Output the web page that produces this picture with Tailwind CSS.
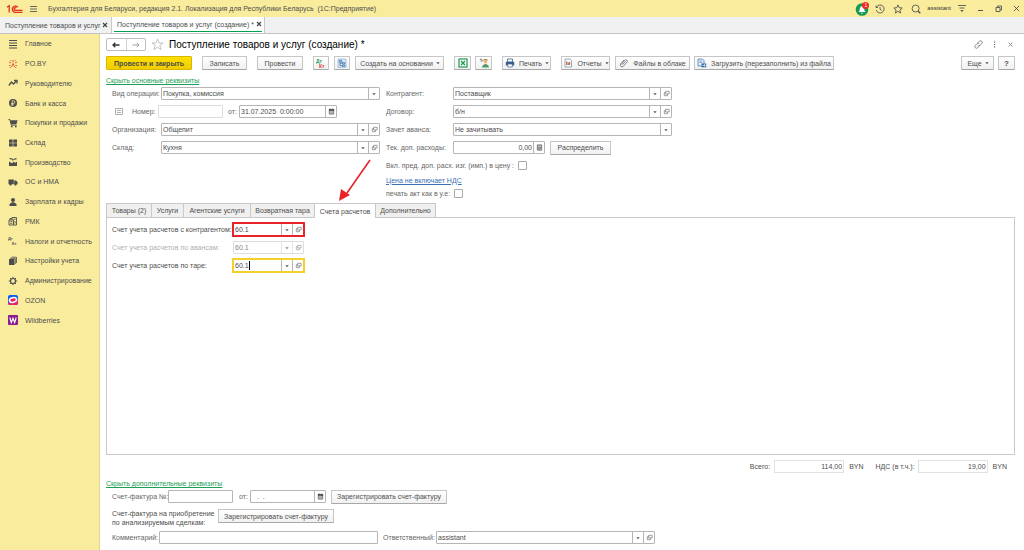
<!DOCTYPE html>
<html lang="ru">
<head>
  <meta charset="UTF-8">
  <meta name="viewport" content="width=device-width, initial-scale=1">
  <title>Поступление товаров и услуг (создание)</title>
  <script src="https://cdn.jsdelivr.net/npm/@tailwindcss/browser@4"></script>
</head>
<body class="flex min-h-screen flex-col bg-white font-['Liberation_Sans',Arial,sans-serif] text-[7px] leading-[9px] text-[#4d4d4d]">

  <!-- Shared icons -->
  <svg class="hidden">
    <symbol id="caret" viewBox="0 0 6 6"><path d="M1.300 2.200h3.400L3 4.200z" fill="#555"/></symbol>
    <symbol id="open" viewBox="0 0 8 8"><path d="M3 1.500h4v3H3zM3 3H1.500v3.500H5V4.500" fill="none" stroke="#777" stroke-width=".8"/></symbol>
    <symbol id="calendar" viewBox="0 0 8 8"><path d="M1.500 2h5v5h-5z" fill="#ddd" stroke="#555" stroke-width=".8"/><path d="M1 1.500h6v1.500H1zM2 .6h1v1H2zM5 .6h1v1H5z" fill="#444"/><path d="M2 4.300h4M2 5.700h4M3.300 3.200v3.500M4.800 3.200v3.500" stroke="#777" stroke-width=".4"/></symbol>
  </svg>

  <!-- Title bar -->
  <header class="flex h-[17px] items-center bg-[#faec9d] pl-[6px] pr-[3px]">
    <svg class="h-[10px] w-[17px]" viewBox="0 0 17 10" fill="none" stroke="#e0301e" stroke-width="1.300">
      <path d="M1 3.200L3.200 1.800V8.500M11.800 3.300A3.100 3.100 0 1 0 8.800 8.300H16.500M10.300 4A1.400 1.400 0 1 0 8.800 6.400H16.500"/>
    </svg>
    <button class="ml-[6px]" aria-label="Меню">
      <svg class="h-[8px] w-[9px]" viewBox="0 0 9 8" stroke="#555" stroke-width=".9"><path d="M1 1.500h7M1 4h7M1 6.500h7"/></svg>
    </button>
    <span class="ml-[10px] whitespace-pre">Бухгалтерия для Беларуси, редакция 2.1. Локализация для Республики Беларусь  (1С:Предприятие)</span>
    <div class="ml-auto flex items-center gap-[8px]">
      <button class="relative" aria-label="Уведомления">
        <svg class="h-[14px] w-[14px]" viewBox="0 0 14 14"><circle cx="7" cy="7.500" r="6.300" fill="#159a52"/><path d="M3.500 10c1.200-1 1-2 1.400-3.500C5.300 4.800 6 4.200 7 4.200s1.700.6 2.100 2.300c.4 1.500.2 2.500 1.400 3.500zM6 10.800h2c0 1.200-2 1.200-2 0z" fill="#fff"/></svg>
        <span class="absolute right-0 top-0 size-[7px] rounded-full bg-[#ee2b24] text-center text-[5px] leading-[7px] text-white">1</span>
      </button>
      <button class="-ml-[2px]" aria-label="История"><svg class="size-[10px]" viewBox="0 0 10 10" fill="none" stroke="#555" stroke-width=".9"><path d="M1.500 3.200A4 4 0 1 1 1.200 6M1 1.500v2h2M5 2.800v2.500l1.700 1"/></svg></button>
      <button aria-label="Избранное"><svg class="size-[10px]" viewBox="0 0 10 10" fill="none" stroke="#555" stroke-width=".9"><path d="M5 .9l1.200 2.800 3 .3-2.300 2 .7 3L5 7.400 2.400 9l.7-3L.8 4l3-.3z"/></svg></button>
      <button aria-label="Поиск"><svg class="size-[10px]" viewBox="0 0 10 10" fill="none" stroke="#555"><circle cx="4.600" cy="4.500" r="3.500" stroke-width=".9"/><path d="M7 7l2.300 2.300" stroke-width="1.500"/></svg></button>
      <span class="-mx-[2px] text-[6px] text-[#333]">assistant</span>
      <button aria-label="Настройки"><svg class="h-[9px] w-[10px]" viewBox="0 0 10 9"><path d="M1 1.500h8M2.500 4h5" stroke="#555" stroke-width=".9"/><path d="M3.300 6h3.400L5 8z" fill="#555"/></svg></button>
      <button class="ml-[1px]" aria-label="Свернуть"><svg class="size-[9px]" viewBox="0 0 9 9" stroke="#555"><path d="M2 6.500h5"/></svg></button>
      <button class="ml-[1px]" aria-label="Развернуть"><svg class="size-[9px]" viewBox="0 0 9 9" fill="none" stroke="#555" stroke-width=".9"><path d="M2 3.500h4v4H2zM3.500 3.500V2h4v4H6"/></svg></button>
      <button class="ml-[1px]" aria-label="Закрыть"><svg class="size-[9px]" viewBox="0 0 9 9" stroke="#555" stroke-width=".9"><path d="M2 2l5 5M7 2L2 7"/></svg></button>
    </div>
  </header>

  <!-- Open windows -->
  <nav class="flex h-[17px] border-b border-[#c4c4c4] bg-[#f1f1f1] [&_svg]:size-[6px]">
    <a href="#" class="flex w-[112px] items-center justify-between border-r border-[#c9c9c9] pl-[5px] pr-[3px]">Поступление товаров и услуг <svg viewBox="0 0 6 6" stroke="#444" stroke-width="1.200"><path d="M1 1l4 4M5 1L1 5"/></svg></a>
    <a href="#" class="flex w-[153px] flex-col border-r border-[#c9c9c9] bg-white px-[2px]">
      <span class="flex h-[14px] items-center justify-between pl-[3px]">Поступление товаров и услуг (создание) * <svg viewBox="0 0 6 6" stroke="#444" stroke-width="1.200"><path d="M1 1l4 4M5 1L1 5"/></svg></span>
      <span class="h-px bg-[#00a050]"></span>
    </a>
  </nav>

  <div class="flex flex-1">

    <!-- Sections -->
    <aside class="w-[100px] shrink-0 border-r border-[#e0d491] bg-[#faec9d]">
      <nav class="grid h-[296px] auto-rows-fr [&_a]:flex [&_a]:items-center [&_a]:gap-[7px] [&_a]:pl-[8px] [&_svg]:size-[10px]">
        <a href="#"><svg viewBox="0 0 10 10" stroke="#4d4d4d"><path d="M1 1.500h8M1 4h8M1 6.500h8M1 9h8"/></svg>Главное</a>
        <a href="#"><svg viewBox="0 0 10 10" stroke="#e2493b" stroke-width=".9" fill="none"><path d="M5 1v2.500M5 4.500L3.500 8M5 4.500L6.500 8M1 3l2 1M9 3L7 4M1 6.500h1.500M7.500 6.500H9M2 9l.5-1M8 9l-.5-1M2.500 1l.7 1M7.500 1l-.7 1"/></svg>PO.BY</a>
        <a href="#"><svg viewBox="0 0 10 10" stroke="#4d4d4d" stroke-width="1.300" fill="none"><path d="M.8 7.500L3.500 4l2 2L8.500 3"/><path d="M6 2.500h3v3" /></svg>Руководителю</a>
        <a href="#"><svg viewBox="0 0 10 10"><circle cx="5" cy="5" r="4" fill="#4d4d4d"/><path d="M4.200 8V2.800h1.300a1.300 1.300 0 0 1 0 2.700H3.200M3.200 6.800h2.500" fill="none" stroke="#faec9d" stroke-width=".8"/></svg>Банк и касса</a>
        <a href="#"><svg viewBox="0 0 10 10"><path d="M.5 1.500h1.300L3.300 7H8.500" fill="none" stroke="#4d4d4d"/><path d="M2.200 2.300h7.300L8.500 6H3.200z" fill="#4d4d4d"/><circle cx="3.800" cy="8.500" r=".9" fill="#4d4d4d"/><circle cx="7.800" cy="8.500" r=".9" fill="#4d4d4d"/></svg>Покупки и продажи</a>
        <a href="#"><svg viewBox="0 0 10 10" fill="#4d4d4d"><path d="M1 1.500h3.700v3.200H1zM5.300 1.500H9v3.200H5.300zM1 5.300h3.700v3.200H1zM5.300 5.300H9v3.200H5.300z"/></svg>Склад</a>
        <a href="#"><svg viewBox="0 0 10 10" fill="#4d4d4d"><path d="M1 9V4.500l3 1.800 2-1.800 1 1.500 2-1.500V9z"/><path d="M1.500 1.500l2.500.5 1 1.500M5.500 2.500l3-.8" fill="none" stroke="#4d4d4d" stroke-width="1.200"/></svg>Производство</a>
        <a href="#"><svg viewBox="0 0 10 10" fill="#4d4d4d"><path d="M.5 2.500h5.300v4.700H.5zM6.200 3.500H8L9.500 5v2.200H6.200z"/><circle cx="2.500" cy="7.600" r="1.100"/><circle cx="7.500" cy="7.600" r="1.100"/></svg>ОС и НМА</a>
        <a href="#"><svg viewBox="0 0 10 10" fill="#4d4d4d"><circle cx="5" cy="3" r="2"/><path d="M1.500 9V7.500C1.500 6 3.500 6 4 5.200h2C6.500 6 8.500 6 8.500 7.500V9z"/></svg>Зарплата и кадры</a>
        <a href="#"><svg viewBox="0 0 10 10" fill="none" stroke="#4d4d4d" stroke-width=".9"><path d="M1 4h4.500v5H1zM4 4V1.500h4.500V9h-3M5.500 3.200h2M2.300 5.700h2M2.300 7.300h2M7 5v2.500M2 4V2.500h2"/></svg>РМК</a>
        <a href="#"><svg viewBox="0 0 10 10" fill="#4d4d4d" font-size="4" font-weight="bold"><text x="0" y="4">Дт</text><text x="4" y="9">Кт</text></svg>Налоги и отчетность</a>
        <a href="#"><svg viewBox="0 0 10 10" fill="#4d4d4d"><path d="M1 3h5.500v6H1z"/><path d="M2 2.300h5.300V8M3.500 1.200h5V7" fill="none" stroke="#4d4d4d" stroke-width=".8"/></svg>Настройки учета</a>
        <a href="#"><svg viewBox="0 0 10 10" fill="none" stroke="#4d4d4d"><circle cx="5" cy="5" r="2.500" stroke-width="1.200"/><path d="M5 .8v1.700M5 7.500v1.700M.8 5h1.700M7.500 5h1.700M2 2l1.200 1.200M6.800 6.800L8 8M8 2L6.800 3.200M3.200 6.800L2 8"/></svg>Администрирование</a>
        <a href="#"><svg viewBox="0 0 10 10"><rect width="10" height="10" rx="2" fill="#0b5cf5"/><path d="M0 6.500C2 10 8 9 10 4v4a2 2 0 0 1-2 2H2a2 2 0 0 1-2-2z" fill="#f5215c"/><ellipse cx="5" cy="5" rx="3.600" ry="2.300" fill="#f5215c" stroke="#fff" stroke-width="1.500" transform="rotate(-12 5 5)"/></svg>OZON</a>
        <a href="#"><svg viewBox="0 0 10 10"><rect width="10" height="10" rx="1" fill="#8d1b91"/><path d="M1.800 2.500L3.300 7.500 5 3.200 6.700 7.500 8.200 2.500" fill="none" stroke="#fff" stroke-width="1.100"/></svg>Wildberries</a>
      </nav>
    </aside>

    <main class="flex min-w-0 flex-1 flex-col pl-[6px] pr-[9px]">

      <!-- Document header -->
      <div class="mt-[4px] flex h-[13px] items-center">
        <div class="flex h-[13px] w-[40px] rounded-[2px] border border-[#bdbdbd]">
          <button class="flex flex-1 items-center justify-center border-r border-[#cfcfcf]" aria-label="Назад"><svg class="size-[8px]" viewBox="0 0 8 8" fill="none" stroke="#333" stroke-width="1.300"><path d="M7.500 4H1M3.300 1.800L1 4l2.300 2.200"/></svg></button>
          <button class="flex flex-1 items-center justify-center" aria-label="Вперед"><svg class="size-[8px]" viewBox="0 0 8 8" fill="none" stroke="#999" stroke-width=".9"><path d="M.5 4H7M4.700 1.800L7 4 4.700 6.200"/></svg></button>
        </div>
        <button class="ml-[5px]" aria-label="В избранное"><svg class="size-[13px]" viewBox="0 0 13 13" fill="none" stroke="#b5b5b5" stroke-width=".8"><path d="M6.500 1l1.500 4h4L8.800 7.400l1.300 4.200-3.600-2.500-3.600 2.500 1.300-4.200L1 5h4z"/></svg></button>
        <h1 class="ml-[5px] text-[10px] leading-[12px] text-black">Поступление товаров и услуг (создание) *</h1>
        <div class="ml-auto flex items-center gap-[7px]">
          <button aria-label="Ссылка"><svg class="size-[9px]" viewBox="0 0 9 9" fill="none" stroke="#777" stroke-width=".9"><path d="M3.800 2.800L5.300 1.300a1.600 1.600 0 0 1 2.400 2.400L6 5.400a1.500 1.500 0 0 1-2.200 0M5.200 6.200L3.700 7.700a1.600 1.600 0 0 1-2.400-2.400L3 3.600a1.500 1.500 0 0 1 2.200 0"/></svg></button>
          <button aria-label="Ещё"><svg class="size-[9px]" viewBox="0 0 9 9" fill="#666"><path d="M4 1.500h1.200v1.200H4zM4 3.900h1.200v1.200H4zM4 6.300h1.200v1.200H4z"/></svg></button>
          <button aria-label="Закрыть"><svg class="size-[9px]" viewBox="0 0 9 9" stroke="#888" stroke-width=".9"><path d="M2.500 2.500l4 4M6.500 2.500l-4 4"/></svg></button>
        </div>
      </div>

      <!-- Command bar -->
      <div class="mt-[5px] flex h-[14px] [&>button]:flex [&>button]:shrink-0 [&>button]:items-center [&>button]:justify-center [&>button]:gap-[4px] [&>button]:whitespace-nowrap [&>button]:rounded-[1px] [&>button]:border [&>button]:border-[#c6c6c6] [&>button]:border-b-[#a8a8a8] [&>button]:bg-linear-to-b [&>button]:from-white [&>button]:to-[#f1f1f1] [&_svg]:size-[10px]">
        <button class="w-[86px] border-[#d6b800]! from-[#ffe000]! to-[#f2cd00]! font-bold">Провести и закрыть</button>
        <button class="ml-[10px] w-[45px]">Записать</button>
        <button class="ml-[10px] w-[46px]">Провести</button>
        <button class="ml-[10px] w-[16px]" aria-label="Дт Кт"><svg viewBox="0 0 10 10" font-size="5" font-weight="bold"><text x="0" y="5" fill="#1e9e57">Дт</text><text x="3" y="9.500" fill="#e23b30">Кт</text></svg></button>
        <button class="ml-[5px] w-[16px]" aria-label="Структура подчиненности"><svg viewBox="0 0 10 10" fill="none" stroke="#3d74ad" stroke-width=".8"><path d="M1 1h8v8.300H1z" fill="#e3edf7" stroke="#8fb0d0"/><path d="M2.300 2.300h2.500v1.700H2.300zM5.500 4.500h2.300v1.500H5.500zM5.500 7h2.300v1.300H5.500zM3 4v3.700h2.500M3 5.200h2.500"/></svg></button>
        <button class="ml-[5px] w-[89px]">Создать на основании <svg class="-mx-[2px] size-[6px]!"><use href="#caret"/></svg></button>
        <button class="ml-[10px] w-[17px]" aria-label="Excel"><svg viewBox="0 0 10 10"><rect x="1" y="1" width="8" height="8" fill="#fff" stroke="#1f9a50" stroke-width="1.200"/><path d="M3 3l4 4M7 3L3 7" stroke="#1f9a50" stroke-width="1.400"/></svg></button>
        <button class="ml-[4px] w-[17px]" aria-label="Помощник"><svg viewBox="0 0 10 10"><path d="M.8 1.300h2.500M1.500 3h2.500" stroke="#555" stroke-width=".8"/><path d="M4 2.500c.5-2 4.500-2 5 0z" fill="#b5742f"/><circle cx="6.500" cy="3.700" r="1.700" fill="#f3b070"/><path d="M3 9.500c0-4.500 7-4.500 7 0z" fill="#3aa76a"/><path d="M5.800 6.200l.7 2.500.7-2.500" fill="#e23b30"/></svg></button>
        <button class="ml-[10px] w-[49px]"><svg viewBox="0 0 10 10"><path d="M2.500 1h5v3h-5z" fill="#fff" stroke="#3a5f8a" stroke-width=".8"/><path d="M.8 3.800h8.400v3.700H.8z" fill="#3a5f8a"/><path d="M2.700 6h4.600v3H2.700z" fill="#fff" stroke="#3a5f8a" stroke-width=".7"/></svg>Печать <svg class="-mx-[2px] size-[6px]!"><use href="#caret"/></svg></button>
        <button class="ml-[10px] w-[49px]"><svg viewBox="0 0 10 10"><path d="M2 1h5l1.500 1.500V9H2z" fill="#fff" stroke="#7d93ab" stroke-width=".8"/><path d="M3.800 3.500v3.500" stroke="#e23b30" stroke-width="1.200"/><path d="M5.300 4.500V7" stroke="#2f9e55"/><path d="M6.700 3.800V7" stroke="#e23b30"/></svg>Отчеты <svg class="-mx-[2px] size-[6px]!"><use href="#caret"/></svg></button>
        <button class="ml-[5px] w-[75px]"><svg viewBox="0 0 10 10" fill="none" stroke="#777" stroke-width=".9"><path d="M2 6.500L5.800 2.200a1.400 1.400 0 0 1 2.200 1.900L4.200 8.500A1.900 1.900 0 0 1 1.500 6L5 2M3.500 6.700l3-3.300"/></svg>Файлы в облаке</button>
        <button class="ml-[4px] w-[140px]"><svg viewBox="0 0 10 10"><path d="M1 1h4.500L7 2.500V8H1z" fill="#e8f0f8" stroke="#4a7cb0" stroke-width=".8"/><path d="M2.300 3h3M2.300 4.500h3" stroke="#4a7cb0" stroke-width=".6"/><path d="M4.500 5.500h4.700v3.800H4.500z" fill="#2e6ca8"/><path d="M5.300 7.400h3M7 6.200l1.300 1.200L7 8.600" fill="none" stroke="#fff" stroke-width=".7"/></svg>Загрузить (перезаполнить) из файла</button>
        <button class="ml-auto w-[33px]">Еще <svg class="-mx-[2px] size-[6px]!"><use href="#caret"/></svg></button>
        <button class="ml-[4px] w-[17px] text-[8px] font-bold">?</button>
      </div>

      <a href="#" class="mt-[6px] self-start text-[#1e9e57] underline">Скрыть основные реквизиты</a>

      <!-- Main details -->
      <section class="relative mt-[2px] flex items-start gap-[6px] pl-[6px] [&_label]:shrink-0 [&_label]:whitespace-nowrap [&_label]:text-[#666]">
        <div class="flex w-[268px] flex-col gap-[5px]">
          <div class="flex h-[13px] items-center">
            <label for="operation" class="w-[49px]">Вид операции:</label>
            <div class="flex h-full flex-1 rounded-[1px] border border-[#b5b5b5]">
              <select id="operation" class="min-w-0 flex-1 appearance-none pl-[1px]"><option>Покупка, комиссия</option></select>
              <span class="flex w-[11px] items-center justify-center border-l border-[#b5b5b5]"><svg class="size-[6px]"><use href="#caret"/></svg></span>
            </div>
          </div>
          <div class="flex h-[13px] items-center">
            <svg class="ml-[3px] h-[7px] w-[8px]" viewBox="0 0 8 7" fill="none" stroke="#999" stroke-width=".8"><path d="M.5.500h7v6h-7zM2 2.500h4M2 4.500h4"/></svg>
            <label for="number" class="ml-[9px] w-[26px]">Номер:</label>
            <input id="number" class="h-full w-[65px] rounded-[1px] border border-[#dcdcdc]">
            <label for="date" class="ml-[5px] w-[11px]">от:</label>
            <div class="flex h-full w-[98px] rounded-[1px] border border-[#b5b5b5]">
              <input id="date" value="31.07.2025  0:00:00" class="min-w-0 flex-1 whitespace-pre pl-[1px]">
              <button class="flex w-[11px] items-center justify-center border-l border-[#b5b5b5]" aria-label="Календарь"><svg class="size-[7px]"><use href="#calendar"/></svg></button>
            </div>
          </div>
          <div class="flex h-[13px] items-center">
            <label for="company" class="w-[49px]">Организация:</label>
            <div class="flex h-full flex-1 rounded-[1px] border border-[#b5b5b5]">
              <select id="company" class="min-w-0 flex-1 appearance-none pl-[1px]"><option>Общепит</option></select>
              <span class="flex w-[11px] items-center justify-center border-l border-[#b5b5b5]"><svg class="size-[6px]"><use href="#caret"/></svg></span>
              <button class="flex w-[11px] items-center justify-center border-l border-[#b5b5b5]" aria-label="Открыть"><svg class="size-[7px]"><use href="#open"/></svg></button>
            </div>
          </div>
          <div class="flex h-[13px] items-center">
            <label for="store" class="w-[49px]">Склад:</label>
            <div class="flex h-full flex-1 rounded-[1px] border border-[#b5b5b5]">
              <select id="store" class="min-w-0 flex-1 appearance-none pl-[1px]"><option>Кухня</option></select>
              <span class="flex w-[11px] items-center justify-center border-l border-[#b5b5b5]"><svg class="size-[6px]"><use href="#caret"/></svg></span>
              <button class="flex w-[11px] items-center justify-center border-l border-[#b5b5b5]" aria-label="Открыть"><svg class="size-[7px]"><use href="#open"/></svg></button>
            </div>
          </div>
        </div>

        <div class="flex w-[286px] flex-col gap-[5px]">
          <div class="flex h-[13px] items-center">
            <label for="partner" class="w-[67px]">Контрагент:</label>
            <div class="flex h-full flex-1 rounded-[1px] border border-[#b5b5b5]">
              <select id="partner" class="min-w-0 flex-1 appearance-none pl-[1px]"><option>Поставщик</option></select>
              <span class="flex w-[11px] items-center justify-center border-l border-[#b5b5b5]"><svg class="size-[6px]"><use href="#caret"/></svg></span>
              <button class="flex w-[11px] items-center justify-center border-l border-[#b5b5b5]" aria-label="Открыть"><svg class="size-[7px]"><use href="#open"/></svg></button>
            </div>
          </div>
          <div class="flex h-[13px] items-center">
            <label for="contract" class="w-[67px]">Договор:</label>
            <div class="flex h-full flex-1 rounded-[1px] border border-[#b5b5b5]">
              <select id="contract" class="min-w-0 flex-1 appearance-none pl-[1px]"><option>б/н</option></select>
              <span class="flex w-[11px] items-center justify-center border-l border-[#b5b5b5]"><svg class="size-[6px]"><use href="#caret"/></svg></span>
              <button class="flex w-[11px] items-center justify-center border-l border-[#b5b5b5]" aria-label="Открыть"><svg class="size-[7px]"><use href="#open"/></svg></button>
            </div>
          </div>
          <div class="flex h-[13px] items-center">
            <label for="advance" class="w-[67px]">Зачет аванса:</label>
            <div class="flex h-full flex-1 rounded-[1px] border border-[#b5b5b5]">
              <select id="advance" class="min-w-0 flex-1 appearance-none pl-[1px]"><option>Не зачитывать</option></select>
              <span class="flex w-[11px] items-center justify-center border-l border-[#b5b5b5]"><svg class="size-[6px]"><use href="#caret"/></svg></span>
            </div>
          </div>
          <div class="flex h-[13px] items-center">
            <label for="expenses" class="w-[67px]">Тек. доп. расходы:</label>
            <div class="flex h-full w-[92px] rounded-[1px] border border-[#b5b5b5]">
              <input id="expenses" value="0,00" class="min-w-0 flex-1 pr-[1px] text-right">
              <button class="flex w-[11px] items-center justify-center border-l border-[#b5b5b5]" aria-label="Калькулятор"><svg class="size-[7px]" viewBox="0 0 8 8"><path d="M1.500 1h5v6h-5z" fill="#ddd" stroke="#555" stroke-width=".8"/><path d="M1.500 2h5M2 4h4M2 5.500h4M3.300 3v4M4.800 3v4" stroke="#666" stroke-width=".6"/></svg></button>
            </div>
            <button class="ml-[5px] h-[14px] w-[61px] rounded-[1px] border border-[#c6c6c6] border-b-[#a8a8a8] bg-linear-to-b from-white to-[#f1f1f1]">Распределить</button>
          </div>
          <div class="flex h-[12px] items-center gap-[4px]">
            <label for="include">Вкл. пред. доп. расх. изг. (имп.) в цену :</label>
            <input id="include" type="checkbox" class="size-[9px] appearance-none rounded-[1px] border border-[#a8a8a8]">
          </div>
          <div class="-my-[1px] flex h-[10px] items-center"><a href="#" class="text-[#3a70b5] underline">Цена не включает НДС</a></div>
          <div class="flex h-[9px] items-center gap-[4px]">
            <label for="print">печать акт как в у.е:</label>
            <input id="print" type="checkbox" class="size-[9px] appearance-none rounded-[1px] border border-[#a8a8a8]">
          </div>
        </div>

        <!-- Pointer to the accounts tab -->
        <svg class="pointer-events-none absolute left-[230px] top-[70px] h-[46px] w-[38px]" viewBox="0 0 38 46"><path d="M34 3L11 36" stroke="#e8232a" stroke-width="1.600"/><path d="M3 44L5 32l9 6z" fill="#e8232a"/></svg>
      </section>

      <!-- Tabs -->
      <div class="mt-[5px] flex h-[14px] [&>button]:border [&>button]:border-b-0 [&>button]:border-[#c9c9c9] [&>button]:bg-[#f0f0f0] [&>button]:-mr-px" role="tablist">
        <button role="tab" class="w-[46px]">Товары (2)</button>
        <button role="tab" class="w-[33px]">Услуги</button>
        <button role="tab" class="w-[68px]">Агентские услуги</button>
        <button role="tab" class="w-[65px]">Возвратная тара</button>
        <button role="tab" aria-selected="true" class="z-10 -mb-px w-[62px] bg-white!">Счета расчетов</button>
        <button role="tab" class="w-[61px]">Дополнительно</button>
      </div>
      <section class="min-h-[237px] flex-1 border border-[#c9c9c9] pl-[5px] pt-[5px]">
        <div class="flex flex-col gap-[5px]">
          <div class="flex h-[13px] items-center">
            <label for="acc1" class="w-[121px]">Счет учета расчетов с контрагентом:</label>
            <div class="flex h-full w-[71px] border border-[#b5b5b5] outline-2 -outline-offset-1 outline-[#e8232a]">
              <input id="acc1" value="60.1" class="min-w-0 flex-1 pl-[1px]">
              <button class="flex w-[11px] items-center justify-center border-l border-[#b5b5b5]" aria-label="Выбрать"><svg class="size-[6px]"><use href="#caret"/></svg></button>
              <button class="flex w-[11px] items-center justify-center border-l border-[#b5b5b5]" aria-label="Открыть"><svg class="size-[7px]"><use href="#open"/></svg></button>
            </div>
          </div>
          <div class="flex h-[13px] items-center text-[#b0b0b0]">
            <label for="acc2" class="w-[121px]">Счет учета расчетов по авансам:</label>
            <div class="flex h-full w-[71px] rounded-[1px] border border-[#dcdcdc]">
              <input id="acc2" value="60.1" disabled class="min-w-0 flex-1 pl-[1px] text-[#888]">
              <button disabled class="flex w-[11px] items-center justify-center border-l border-[#dcdcdc] opacity-70" aria-label="Выбрать"><svg class="size-[6px]"><use href="#caret"/></svg></button>
              <button disabled class="flex w-[11px] items-center justify-center border-l border-[#dcdcdc] opacity-70" aria-label="Открыть"><svg class="size-[7px]"><use href="#open"/></svg></button>
            </div>
          </div>
          <div class="flex h-[13px] items-center">
            <label for="acc3" class="w-[121px]">Счет учета расчетов по таре:</label>
            <div class="flex h-full w-[71px] border border-[#f5d02a] outline-2 -outline-offset-1 outline-[#f5d02a]">
              <span class="flex flex-1 items-center pl-[1px]"><input id="acc3" value="60.1" class="w-[15px] border-r border-black"></span>
              <button class="flex w-[11px] items-center justify-center border-l border-[#b5b5b5]" aria-label="Выбрать"><svg class="size-[6px]"><use href="#caret"/></svg></button>
              <button class="flex w-[11px] items-center justify-center border-l border-[#b5b5b5]" aria-label="Открыть"><svg class="size-[7px]"><use href="#open"/></svg></button>
            </div>
          </div>
        </div>
      </section>

      <!-- Totals -->
      <div class="mt-[5px] flex h-[13px] items-center justify-end pr-[8px]">
        <label for="total" class="mr-[4px]">Всего:</label>
        <input id="total" value="114,00" readonly class="h-full w-[70px] border border-[#e2e2e2] pr-[1px] text-right">
        <span class="ml-[5px]">BYN</span>
        <label for="vat" class="ml-[12px] mr-[3px]">НДС (в т.ч.):</label>
        <input id="vat" value="19,00" readonly class="h-full w-[70px] border border-[#e2e2e2] pr-[1px] text-right">
        <span class="ml-[5px]">BYN</span>
      </div>

      <a href="#" class="mt-[6px] self-start text-[#1e9e57] underline">Скрыть дополнительные реквизиты</a>

      <!-- Additional details -->
      <section class="mt-[2px] pb-[6px] pl-[6px] [&_label]:shrink-0 [&_label]:whitespace-nowrap [&_label]:text-[#666]">
        <div class="flex h-[13px] items-center">
          <label for="invoice" class="w-[56px]">Счет-фактура №:</label>
          <input id="invoice" class="h-full w-[65px] rounded-[1px] border border-[#b5b5b5]">
          <label for="invoiceDate" class="ml-[6px] w-[11px]">от:</label>
          <div class="flex h-full w-[76px] rounded-[1px] border border-[#b5b5b5]">
            <input id="invoiceDate" value=".  ." class="min-w-0 flex-1 whitespace-pre pl-[6px]">
            <button class="flex w-[11px] items-center justify-center border-l border-[#b5b5b5]" aria-label="Календарь"><svg class="size-[7px]"><use href="#calendar"/></svg></button>
          </div>
          <button class="ml-[5px] h-[14px] w-[116px] rounded-[1px] border border-[#c6c6c6] border-b-[#a8a8a8] bg-linear-to-b from-white to-[#f1f1f1]">Зарегистрировать счет-фактуру</button>
        </div>
        <div class="mt-[6px] flex items-start">
          <span class="w-[106px]">Счет-фактура на приобретение<br>по анализируемым сделкам:</span>
          <button class="h-[14px] w-[116px] rounded-[1px] border border-[#c6c6c6] border-b-[#a8a8a8] bg-linear-to-b from-white to-[#f1f1f1]">Зарегистрировать счет-фактуру</button>
        </div>
        <div class="mt-[4px] flex h-[13px] items-center">
          <label for="comment" class="w-[47px]">Комментарий:</label>
          <input id="comment" class="h-full w-[219px] rounded-[1px] border border-[#b5b5b5]">
          <label for="responsible" class="ml-[5px] w-[53px]">Ответственный:</label>
          <div class="flex h-full w-[219px] rounded-[1px] border border-[#b5b5b5]">
            <select id="responsible" class="min-w-0 flex-1 appearance-none pl-[1px]"><option>assistant</option></select>
            <span class="flex w-[11px] items-center justify-center border-l border-[#b5b5b5]"><svg class="size-[6px]"><use href="#caret"/></svg></span>
            <button class="flex w-[11px] items-center justify-center border-l border-[#b5b5b5]" aria-label="Открыть"><svg class="size-[7px]"><use href="#open"/></svg></button>
          </div>
        </div>
      </section>
    </main>
  </div>
</body>
</html>
